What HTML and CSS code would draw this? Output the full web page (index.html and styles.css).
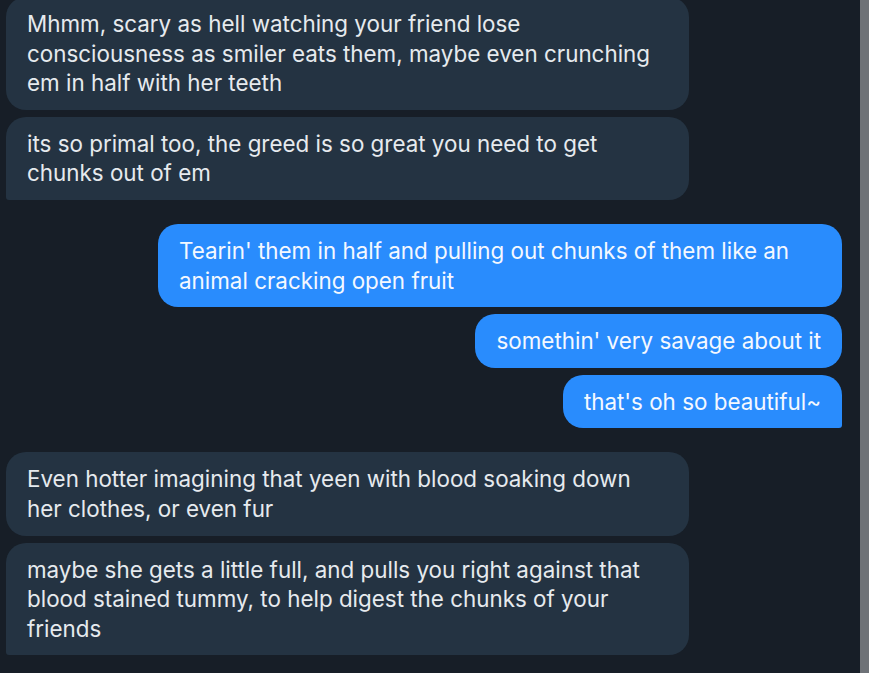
FILE: index.html
```html
<!DOCTYPE html>
<html>
<head>
<meta charset="utf-8">
<link rel="stylesheet" href="styles.css">
</head>
<body>
<div class="app">
  <div class="chat">
    <div class="group in">
      <div class="bubble">Mhmm, scary as hell watching your friend lose consciousness as smiler eats them, maybe even crunching em in half with her teeth</div>
      <div class="bubble last">its so primal too, the greed is so great you need to get chunks out of em</div>
    </div>
    <div class="group out">
      <div class="bubble">Tearin' them in half and pulling out chunks of them like an animal cracking open fruit</div>
      <div class="bubble">somethin' very savage about it</div>
      <div class="bubble last">that's oh so beautiful~</div>
    </div>
    <div class="group in">
      <div class="bubble">Even hotter imagining that yeen with blood soaking down her clothes, or even fur</div>
      <div class="bubble last">maybe she gets a little full, and pulls you right against that blood stained tummy, to help digest the chunks of your friends</div>
    </div>
  </div>
  <div class="scrollbar"></div>
</div>
</body>
</html>
```

FILE: styles.css
```css
html, body {
  margin: 0;
  padding: 0;
  height: 100%;
  background: #171e27;
  overflow: hidden;
}
.app {
  display: flex;
  height: 673px;
}
.chat {
  flex: 1;
  display: flex;
  flex-direction: column;
  gap: 24px;
  padding: 0 18px 0 6px;
  margin-top: -3px;
  font-family: Inter, "Noto Sans", sans-serif;
  font-size: 22.4px;
  line-height: 29.6px;
}
.scrollbar {
  width: 9px;
  background: #6e7277;
}
.group {
  display: flex;
  flex-direction: column;
  gap: 7px;
}
.group.in { align-items: flex-start; }
.group.out { align-items: flex-end; }
.bubble {
  max-width: 642px;
  padding: 12px 21px;
  border-radius: 20px;
  box-sizing: content-box;
}
.in .bubble {
  background: #243342;
  color: #e6eaee;
  width: 641px;
}
.out .bubble {
  background: #298cfd;
  color: #f4f8ff;
}
.in .bubble.last { border-bottom-left-radius: 3px; }
.out .bubble.last { border-bottom-right-radius: 3px; }
```
